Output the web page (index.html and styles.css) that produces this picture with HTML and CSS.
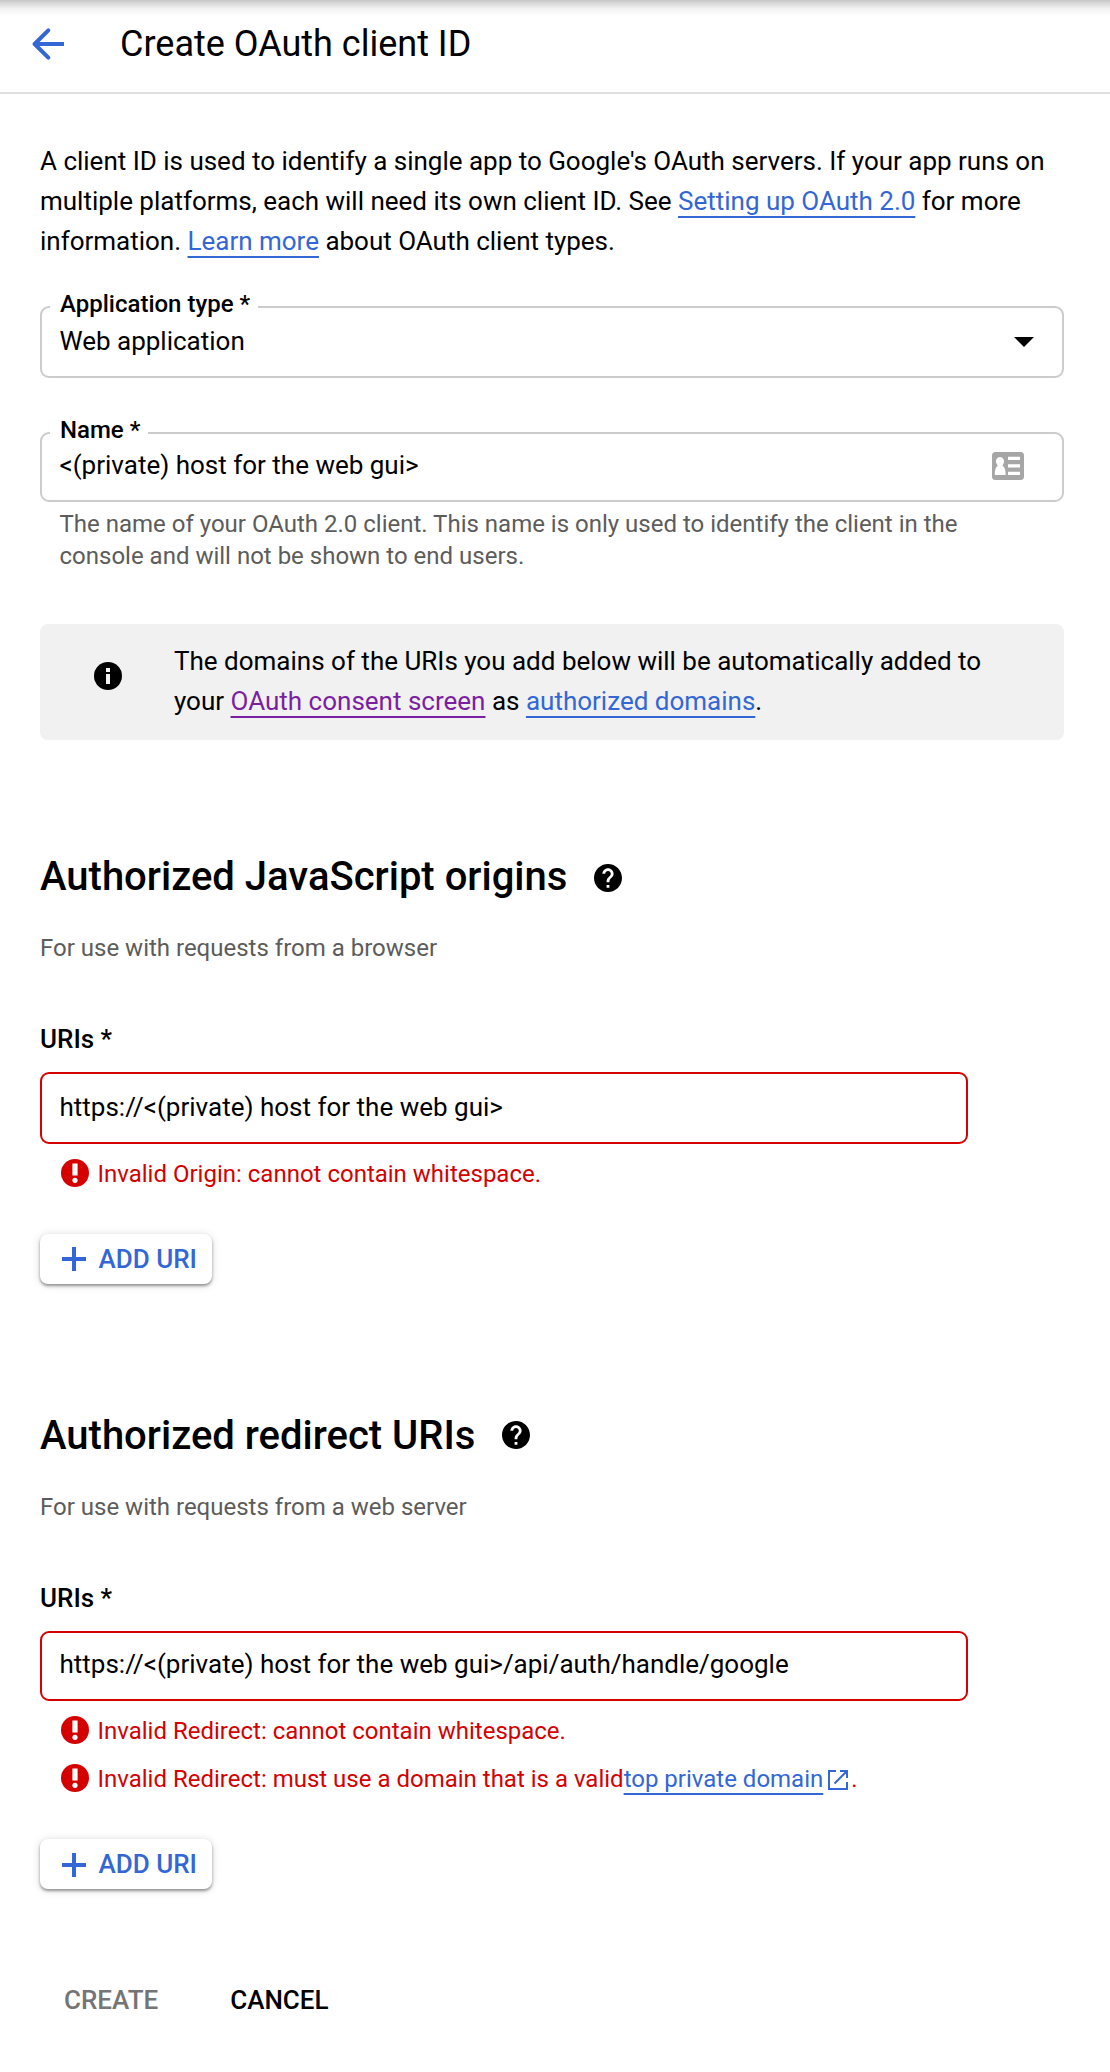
FILE: index.html
```html
<!DOCTYPE html>
<html lang="en">
<head>
<meta charset="utf-8">
<title>Create OAuth client ID</title>
<link rel="stylesheet" href="styles.css">
</head>
<body>
<svg class="defs" aria-hidden="true">
  <symbol id="error" viewBox="0 0 28 28"><circle cx="14" cy="14" r="14" fill="#d50000"/><path d="M11.4 4.5h5.2v12h-5.2z" fill="#fff"/><circle cx="14" cy="21.3" r="2.6" fill="#fff"/></symbol>
  <symbol id="help" viewBox="2 2 20 20"><path d="M12 2C6.48 2 2 6.48 2 12s4.48 10 10 10 10-4.48 10-10S17.52 2 12 2zm1 17h-2v-2h2v2zm2.07-7.75l-.9.92C13.45 12.9 13 13.5 13 15h-2v-.5c0-1.1.45-2.1 1.17-2.83l1.24-1.26c.37-.36.59-.86.59-1.41 0-1.1-.9-2-2-2s-2 .9-2 2H8c0-2.21 1.79-4 4-4s4 1.79 4 4c0 .88-.36 1.68-.93 2.25z"/></symbol>
  <symbol id="plus" viewBox="0 0 24 24"><path d="M10 0h4v10h10v4H14v10h-4V14H0v-4h10z" fill="#3367d6"/></symbol>
</svg>
<header class="topbar">
  <svg class="back" viewBox="0 0 32 32"><path d="M16.300 2.300 2.600 16 16.300 29.700" fill="none" stroke="#3367d6" stroke-width="4" stroke-linecap="round" stroke-linejoin="round"/><path d="M3 14h29v4H3z" fill="#3367d6"/></svg>
  <h1 class="title">Create OAuth client ID</h1>
</header>
<main class="page">
  <p class="intro">A client ID is used to identify a single app to Google's OAuth servers. If your app runs on multiple platforms, each will need its own client ID. See <a class="link">Setting up OAuth 2.0</a> for more information. <a class="link">Learn more</a> about OAuth client types.</p>

  <div class="field field-type">
    <span class="label">Application type *</span>
    <span class="value">Web application</span>
    <svg class="caret" viewBox="0 0 20 10"><path d="M0 0h20L10 10z"/></svg>
  </div>

  <div class="field field-name">
    <span class="label">Name *</span>
    <span class="value">&lt;(private) host for the web gui&gt;</span>
    <svg class="card" viewBox="0 0 32 28"><rect width="32" height="28" rx="3.500" fill="#a6a6a6"/><path d="M8 5c2.400 0 4 1.900 4 4.300 0 1.900-.8 3.500-1.700 4.300 2.200 1.100 3.400 4.200 3.400 9.400H2.700c0-5.200 1.200-8.300 3.200-9.400C4.800 12.800 4 11.200 4 9.300 4 6.900 5.600 5 8 5zM16 4.800h12V8H16zM16 12.300h12v3.200H16zM16 19.800h12V23H16z" fill="#fff"/></svg>
  </div>
  <p class="hint">The name of your OAuth 2.0 client. This name is only used to identify the client in the console and will not be shown to end users.</p>

  <div class="notice">
    <svg class="icon" viewBox="0 0 28 28"><circle cx="14" cy="14" r="14"/><path d="M12 6h4v4h-4zM12 12h4v10h-4z" fill="#f1f1f1"/></svg>
    <p class="notice-text">The domains of the URIs you add below will be automatically added to your <a class="link visited">OAuth consent screen</a> as <a class="link">authorized domains</a>.</p>
  </div>

  <section class="origins">
    <h2 class="heading">Authorized JavaScript origins <svg class="icon"><use href="#help"/></svg></h2>
    <p class="sub">For use with requests from a browser</p>
    <div class="uris">URIs *</div>
    <div class="field invalid">
      <span class="value">https://&lt;(private) host for the web gui&gt;</span>
    </div>
    <div class="errors">
      <div class="error"><svg class="icon"><use href="#error"/></svg><span>Invalid Origin: cannot contain whitespace.</span></div>
    </div>
    <div class="add"><svg class="plus"><use href="#plus"/></svg>ADD URI</div>
  </section>

  <section class="redirects">
    <h2 class="heading">Authorized redirect URIs <svg class="icon"><use href="#help"/></svg></h2>
    <p class="sub">For use with requests from a web server</p>
    <div class="uris">URIs *</div>
    <div class="field invalid">
      <span class="value">https://&lt;(private) host for the web gui&gt;/api/auth/handle/google</span>
    </div>
    <div class="errors">
      <div class="error"><svg class="icon"><use href="#error"/></svg><span>Invalid Redirect: cannot contain whitespace.</span></div>
      <div class="error"><svg class="icon"><use href="#error"/></svg><span>Invalid Redirect: must use a domain that is a valid<a class="link">top private domain</a></span><svg class="external" viewBox="0 0 20 20"><path d="M8 1H1v18h18v-7M12 1h7v7M18.500 1.500 6.500 13.500" fill="none" stroke="#3367d6" stroke-width="2"/></svg><span>.</span></div>
    </div>
    <div class="add"><svg class="plus"><use href="#plus"/></svg>ADD URI</div>
  </section>

  <div class="actions"><span class="create">CREATE</span><span>CANCEL</span></div>
</main>
</body>
</html>
```
FILE: styles.css
```css
* { box-sizing: border-box; }
body { margin: 0; background: #fff; color: #000; font: 26px/40px Roboto, sans-serif; }
h1, h2, p { margin: 0; }
svg { flex: none; display: block; }
.defs { position: absolute; width: 0; height: 0; }

.topbar {
  height: 94px;
  padding: 0 32px 4px;
  display: flex;
  align-items: center;
  border-bottom: 2px solid #e0e0e0;
  background: linear-gradient(#c6c6c6 0, #dcdcdc 4px, #f3f3f3 9px, #fff 16px);
}
.back { width: 32px; height: 32px; margin-right: 56px; }
.title { font-size: 36px; font-weight: 400; line-height: 48px; }

.page { padding: 47px 46px 0 40px; }
.intro { letter-spacing: -0.01px; }
.link {
  color: #3367d6;
  text-decoration: underline 2px;
  text-underline-offset: 6px;
  text-decoration-skip-ink: none;
}
.link.visited { color: #7b1fa2; }

.field {
  position: relative;
  display: flex;
  align-items: center;
  border: 2px solid #ccc;
  border-radius: 9px;
  padding: 0 18px 0 17.5px;
}
.label {
  position: absolute;
  top: -20px;
  left: 8px;
  padding: 0 8px 0 10px;
  background: #fff;
  font-size: 24px;
  font-weight: 500;
  line-height: 32px;
}
.value { flex: 1; margin-top: -2px; }
.field-type { height: 72px; margin-top: 45px; padding-bottom: 1px; }
.caret { width: 20px; height: 10px; margin-right: 10px; }
.field-name { height: 70px; margin-top: 54px; padding-bottom: 3px; }
.card { width: 32px; height: 28px; margin-right: 20px; }
.hint { margin-top: 6px; padding: 0 60px 0 19.5px; font-size: 24px; line-height: 32px; color: #5c5c5c; }

.notice {
  margin-top: 52px;
  height: 116px;
  display: flex;
  padding: 17px 40px 0 54px;
  gap: 52px;
  background: #f1f1f1;
  border-radius: 8px;
}
.icon { width: 28px; height: 28px; }
.notice .icon { margin-top: 21px; }

.origins { margin-top: 113px; }
.redirects { margin-top: 128px; }
.heading { display: flex; align-items: center; gap: 27px; font-size: 40px; font-weight: 500; line-height: 48px; }
.heading .icon { margin-top: 1px; }
.redirects .heading .icon { margin-top: -2px; }
.sub { margin-top: 31px; font-size: 24px; line-height: 32px; color: #5c5c5c; }
.uris { margin-top: 59px; font-weight: 500; line-height: 32px; }
.invalid { width: 928px; height: 72px; margin-top: 17px; border-color: #d50000; padding-bottom: 1px; }
.redirects .invalid { height: 70px; padding-bottom: 3px; }
.errors { margin-top: 14px; padding-left: 21px; display: flex; flex-direction: column; gap: 16px; }
.error { display: flex; align-items: center; font-size: 24px; line-height: 32px; color: #d50000; }
.error .icon { margin: -2px 8.500px 0 0; }
.external { width: 20px; height: 20px; margin: 1px 3px 0 5px; }
.add {
  margin-top: 44px;
  width: 172px;
  height: 50px;
  display: flex;
  align-items: center;
  padding-left: 22px;
  gap: 12.500px;
  border-radius: 8px;
  font-weight: 500;
  color: #3367d6;
  box-shadow: 0 2px 3px rgba(0,0,0,.38), 0 1px 10px rgba(0,0,0,.14);
}
.plus { width: 24px; height: 24px; }
.redirects .plus { margin-top: 2px; }

.actions { margin-top: 95px; padding-left: 24px; display: flex; gap: 72px; font-weight: 500; line-height: 32px; }
.create { color: #757575; }
```
